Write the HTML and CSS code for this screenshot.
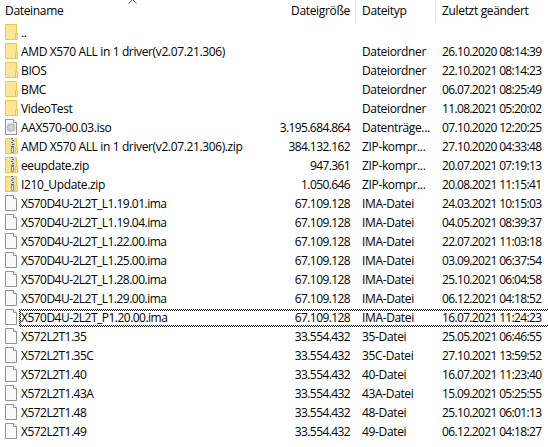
FILE: index.html
```html
<!DOCTYPE html>
<html lang="de">
<head>
  <meta charset="UTF-8">
  <title>Dateien</title>
  <link rel="stylesheet" href="styles.css">
</head>
<body>
  <svg width="0" height="0" class="icon-defs">
    <symbol id="folder" viewBox="0 0 14 17">
      <path d="M.5 .5h11v15H.5z" fill="#ffe596" stroke="#edc84f"/>
      <path d="M10.5 9.5h2v6h-2z" fill="#ffe596" stroke="#edc84f"/>
    </symbol>
    <symbol id="zip" viewBox="0 0 14 17">
      <path d="M.5 .5h11v15H.5z" fill="#ffe08a" stroke="#edc84f"/>
      <path d="M10.5 9.5h2v6h-2z" fill="#ffe596" stroke="#edc84f"/>
      <path d="M5 0h5v10H5z" fill="#e3dcc4"/>
      <path d="M6 .5h2M7 2.5h2M6 4.5h2M7 6.5h2M6 8.5h3" stroke="#666"/>
      <path d="M6.5 9.5h2v5h-2z" fill="#eee" stroke="#888"/>
    </symbol>
    <symbol id="disc" viewBox="0 0 14 17">
      <path d="M.5 .5h8l3 3v12H.5z" fill="#f5f5f5" stroke="#929292"/>
      <path d="M8.5 .5v3h3" fill="#fff" stroke="#929292"/>
      <circle cx="6" cy="8.5" r="4" fill="#c7cbce" stroke="#aaaeb1" stroke-width=".7"/>
      <circle cx="6" cy="8.5" r="1.1" fill="#e8e8e8"/>
    </symbol>
    <symbol id="file" viewBox="0 0 14 17">
      <path d="M.5 .5h8l3 3v12H.5z" fill="#f9f9f9" stroke="#929292"/>
      <path d="M8.5 .5v3h3" fill="#fff" stroke="#929292"/>
    </symbol>
  </svg>

  <div class="file-list">
    <div class="header">
      <span class="name">Dateiname</span>
      <span class="size">Dateigröße</span>
      <span class="type">Dateityp</span>
      <span class="date">Zuletzt geändert</span>
      <svg class="sort" width="9" height="5" viewBox="0 0 9 5"><path d="M.5 4.500 4.500 .5l4 4" fill="none" stroke="#555"/></svg>
    </div>
    <div id="rows"></div>
  </div>

  <script>
    const files = [
      ["folder", "..", "", "", ""],
      ["folder", "AMD X570 ALL in 1 driver(v2.07.21.306)", "", "Dateiordner", "26.10.2020 08:14:39"],
      ["folder", "BIOS", "", "Dateiordner", "22.10.2021 08:14:23"],
      ["folder", "BMC", "", "Dateiordner", "06.07.2021 08:25:49"],
      ["folder", "VideoTest", "", "Dateiordner", "11.08.2021 05:20:02"],
      ["disc", "AAX570-00.03.iso", "3.195.684.864", "Datenträge...", "07.10.2020 12:20:25"],
      ["zip", "AMD X570 ALL in 1 driver(v2.07.21.306).zip", "384.132.162", "ZIP-kompr...", "27.10.2020 04:33:48"],
      ["zip", "eeupdate.zip", "947.361", "ZIP-kompr...", "20.07.2021 07:19:13"],
      ["zip", "I210_Update.zip", "1.050.646", "ZIP-kompr...", "20.08.2021 11:15:41"],
      ["file", "X570D4U-2L2T_L1.19.01.ima", "67.109.128", "IMA-Datei", "24.03.2021 10:15:03"],
      ["file", "X570D4U-2L2T_L1.19.04.ima", "67.109.128", "IMA-Datei", "04.05.2021 08:39:37"],
      ["file", "X570D4U-2L2T_L1.22.00.ima", "67.109.128", "IMA-Datei", "22.07.2021 11:03:18"],
      ["file", "X570D4U-2L2T_L1.25.00.ima", "67.109.128", "IMA-Datei", "03.09.2021 06:37:54"],
      ["file", "X570D4U-2L2T_L1.28.00.ima", "67.109.128", "IMA-Datei", "25.10.2021 06:04:58"],
      ["file", "X570D4U-2L2T_L1.29.00.ima", "67.109.128", "IMA-Datei", "06.12.2021 04:18:52"],
      ["file", "X570D4U-2L2T_P1.20.00.ima", "67.109.128", "IMA-Datei", "16.07.2021 11:24:23", true],
      ["file", "X572L2T1.35", "33.554.432", "35-Datei", "25.05.2021 06:46:55"],
      ["file", "X572L2T1.35C", "33.554.432", "35C-Datei", "27.10.2021 13:59:52"],
      ["file", "X572L2T1.40", "33.554.432", "40-Datei", "16.07.2021 11:23:40"],
      ["file", "X572L2T1.43A", "33.554.432", "43A-Datei", "15.09.2021 05:25:55"],
      ["file", "X572L2T1.48", "33.554.432", "48-Datei", "25.10.2021 06:01:13"],
      ["file", "X572L2T1.49", "33.554.432", "49-Datei", "06.12.2021 04:18:27"]
    ];

    document.getElementById("rows").innerHTML = files.map(([icon, name, size, type, date, focused]) => `
      <div class="row ${icon}${focused ? " focused" : ""}">
        <svg class="icon" width="14" height="17"><use href="#${icon}"/></svg>
        <div class="cells">
          <span class="name">${name}</span>
          <span class="size">${size}</span>
          <span class="type">${type}</span>
          <span class="date">${date}</span>
        </div>
      </div>`).join("");
  </script>
</body>
</html>
```

FILE: styles.css
```css
body {
  margin: 0;
  background: #fff;
  color: #000;
  font-family: "Open Sans", "Noto Sans", sans-serif;
  font-size: 12px;
  overflow: hidden;
}
.icon-defs {
  position: absolute;
}
.file-list {
  width: 548px;
}
.header {
  position: relative;
  display: grid;
  grid-template-columns: 262px 94px 80px 112px;
  height: 23px;
  line-height: 22px;
  margin-bottom: 1px;
  letter-spacing: -0.33px;
}
.header span {
  box-sizing: border-box;
  white-space: nowrap;
}
.header .name {
  padding-left: 5px;
}
.header .size {
  padding-right: 5px;
  border-right: 1px solid #e5e5e5;
}
.header .type {
  padding-left: 6px;
  border-right: 1px solid #e5e5e5;
}
.header .date {
  padding-left: 6px;
}
.sort {
  position: absolute;
  left: 128px;
  top: -1px;
}
.row {
  display: flex;
  height: 19px;
}
.icon {
  flex: none;
  margin-left: 5px;
}
.cells {
  box-sizing: border-box;
  display: grid;
  grid-template-columns: 242px 87px 81px 119px;
  width: 529px;
  height: 18px;
  padding-left: 2px;
  line-height: 17px;
  white-space: nowrap;
}
.cells .name {
  letter-spacing: -0.37px;
}
.file .name {
  letter-spacing: -0.52px;
}
.size {
  text-align: right;
}
.cells .size {
  letter-spacing: -0.6px;
}
.cells .type {
  padding-left: 12px;
  letter-spacing: -0.35px;
}
.cells .date {
  padding-left: 11px;
  letter-spacing: -0.65px;
}
/* dotted focus rectangle, two pixels thick at the top, bottom and left */
.focused .cells {
  background:
    repeating-linear-gradient(90deg, #000 0 1px, transparent 1px 2px) 0 0 / 100% 1px no-repeat,
    repeating-linear-gradient(90deg, transparent 0 1px, #000 1px 2px) 0 1px / 100% 1px no-repeat,
    repeating-linear-gradient(90deg, #000 0 1px, transparent 1px 2px) 0 16px / 100% 1px no-repeat,
    repeating-linear-gradient(90deg, transparent 0 1px, #000 1px 2px) 0 17px / 100% 1px no-repeat,
    repeating-linear-gradient(#000 0 1px, transparent 1px 2px) 0 0 / 1px 100% no-repeat,
    repeating-linear-gradient(transparent 0 1px, #000 1px 2px) 1px 0 / 1px 100% no-repeat;
}
```
